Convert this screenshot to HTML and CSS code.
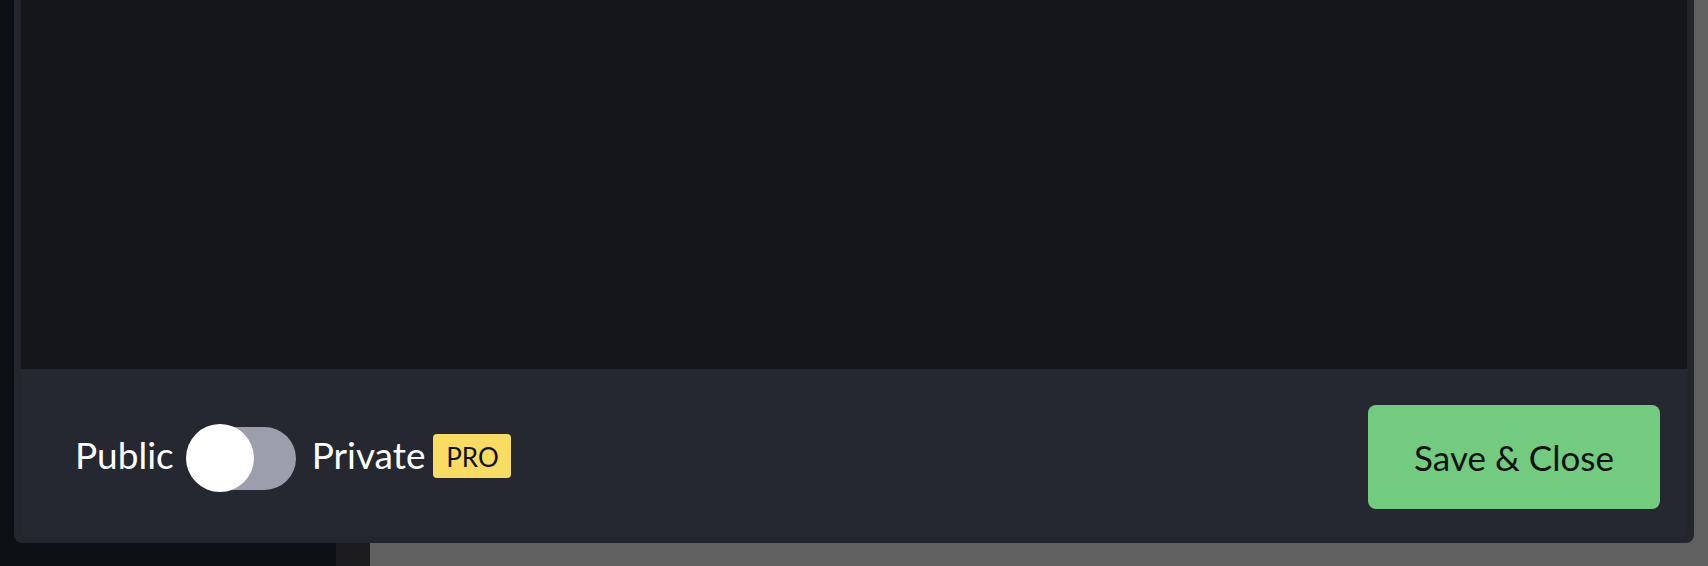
FILE: index.html
```html
<!DOCTYPE html>
<html>
<head>
<meta charset="utf-8">
<link rel="stylesheet" href="styles.css">
</head>
<body>
<div class="page">
  <div class="sidebar"></div>
  <div class="gutter"></div>
  <div class="overlay"></div>
</div>
<div class="modal">
  <div class="modal-inner">
    <div class="editor"></div>
    <div class="footer">
      <div class="visibility">
        <span class="label">Public</span>
        <span class="toggle"><span class="track"></span><span class="knob"></span></span>
        <span class="label private">Private</span>
        <span class="badge">PRO</span>
      </div>
      <button class="save">Save &amp; Close</button>
    </div>
  </div>
</div>
</body>
</html>
```
FILE: styles.css
```css
html, body {
  margin: 0;
  padding: 0;
  width: 1708px;
  height: 566px;
  overflow: hidden;
  font-family: Lato, "Open Sans", sans-serif;
}
.page {
  display: flex;
  height: 566px;
}
.sidebar {
  width: 336px;
  background: #0c1014;
}
.gutter {
  width: 34px;
  background: #1c1c1f;
}
.overlay {
  flex: 1;
  background: #606060;
}
.modal {
  position: absolute;
  left: 14px;
  top: -12px;
  width: 1680px;
  height: 555px;
  box-sizing: border-box;
  padding: 0 7px 6px 7px;
  background: #23262d;
  border-radius: 8px;
}
.modal-inner {
  height: 100%;
  display: flex;
  flex-direction: column;
  background: #15161a;
  border-radius: 4px;
  overflow: hidden;
}
.editor {
  flex: 1;
  background: #15161a;
}
.footer {
  height: 168px;
  box-sizing: border-box;
  padding: 36px 27px 28px 54px;
  background: #252830;
  display: flex;
  align-items: center;
  justify-content: space-between;
  border-radius: 0 0 3px 3px;
}
.visibility {
  display: flex;
  align-items: center;
  padding-top: 2px;
}
.label {
  color: #ffffff;
  font-size: 37px;
  line-height: 44px;
  padding-bottom: 7px;
}
.toggle {
  position: relative;
  width: 110px;
  height: 69px;
  margin-left: 12px;
  margin-right: 16px;
}
.track {
  position: absolute;
  left: 6px;
  right: 0;
  top: 3px;
  height: 63px;
  border-radius: 32px;
  background: #9c9eab;
}
.knob {
  position: absolute;
  left: 0;
  top: 0;
  width: 68px;
  height: 68px;
  border-radius: 50%;
  background: #ffffff;
}
.badge {
  margin-left: 8px;
  margin-bottom: 4px;
  width: 78px;
  height: 44px;
  box-sizing: border-box;
  display: flex;
  align-items: center;
  justify-content: center;
  background: #f9dc62;
  color: #111111;
  border-radius: 4px;
  font-size: 26px;
  padding-top: 1px;
}
.save {
  width: 292px;
  height: 104px;
  border: none;
  border-radius: 8px;
  background: #72cb7e;
  color: #111111;
  font-family: Lato, "Open Sans", sans-serif;
  font-size: 35px;
  padding: 0;
  cursor: pointer;
}
```
